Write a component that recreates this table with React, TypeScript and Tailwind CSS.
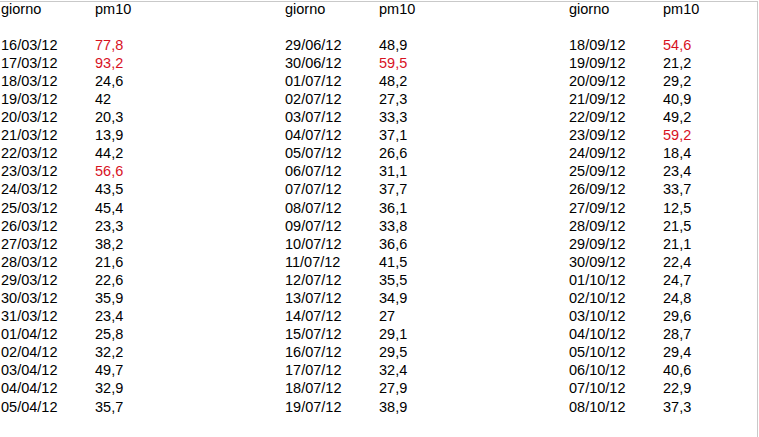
import React from "react";

type Row = [string, string, boolean?];

const groups: Row[][] = [
  [
    ["16/03/12", "77,8", true],
    ["17/03/12", "93,2", true],
    ["18/03/12", "24,6"],
    ["19/03/12", "42"],
    ["20/03/12", "20,3"],
    ["21/03/12", "13,9"],
    ["22/03/12", "44,2"],
    ["23/03/12", "56,6", true],
    ["24/03/12", "43,5"],
    ["25/03/12", "45,4"],
    ["26/03/12", "23,3"],
    ["27/03/12", "38,2"],
    ["28/03/12", "21,6"],
    ["29/03/12", "22,6"],
    ["30/03/12", "35,9"],
    ["31/03/12", "23,4"],
    ["01/04/12", "25,8"],
    ["02/04/12", "32,2"],
    ["03/04/12", "49,7"],
    ["04/04/12", "32,9"],
    ["05/04/12", "35,7"],
  ],
  [
    ["29/06/12", "48,9"],
    ["30/06/12", "59,5", true],
    ["01/07/12", "48,2"],
    ["02/07/12", "27,3"],
    ["03/07/12", "33,3"],
    ["04/07/12", "37,1"],
    ["05/07/12", "26,6"],
    ["06/07/12", "31,1"],
    ["07/07/12", "37,7"],
    ["08/07/12", "36,1"],
    ["09/07/12", "33,8"],
    ["10/07/12", "36,6"],
    ["11/07/12", "41,5"],
    ["12/07/12", "35,5"],
    ["13/07/12", "34,9"],
    ["14/07/12", "27"],
    ["15/07/12", "29,1"],
    ["16/07/12", "29,5"],
    ["17/07/12", "32,4"],
    ["18/07/12", "27,9"],
    ["19/07/12", "38,9"],
  ],
  [
    ["18/09/12", "54,6", true],
    ["19/09/12", "21,2"],
    ["20/09/12", "29,2"],
    ["21/09/12", "40,9"],
    ["22/09/12", "49,2"],
    ["23/09/12", "59,2", true],
    ["24/09/12", "18,4"],
    ["25/09/12", "23,4"],
    ["26/09/12", "33,7"],
    ["27/09/12", "12,5"],
    ["28/09/12", "21,5"],
    ["29/09/12", "21,1"],
    ["30/09/12", "22,4"],
    ["01/10/12", "24,7"],
    ["02/10/12", "24,8"],
    ["03/10/12", "29,6"],
    ["04/10/12", "28,7"],
    ["05/10/12", "29,4"],
    ["06/10/12", "40,6"],
    ["07/10/12", "22,9"],
    ["08/10/12", "37,3"],
  ],
];

export default function App() {
  return (
    <div className="w-[759px] h-[437px] bg-white overflow-hidden">
      <div className="mt-[1px] w-[758px] h-[436px] border-t border-r border-[#c9c9c9] overflow-hidden">
        <div
          className="-mt-[2.5px] flex pl-[1px] text-[14.5px] leading-[18.1px] text-black"
          style={{ fontFamily: '"Liberation Sans", Arial, sans-serif' }}
        >
          {groups.map((g, gi) => (
            <div key={gi} className="w-[284px] shrink-0 grid grid-cols-[94px_1fr]">
              <div>giorno</div>
              <div>pm10</div>
              <div className="h-[18.1px]"></div>
              <div className="h-[18.1px]"></div>
              {g.map(([d, v, red]) => (
                <React.Fragment key={d}>
                  <div>{d}</div>
                  <div className={red ? "text-[#d8121f]" : ""}>{v}</div>
                </React.Fragment>
              ))}
            </div>
          ))}
        </div>
      </div>
    </div>
  );
}
